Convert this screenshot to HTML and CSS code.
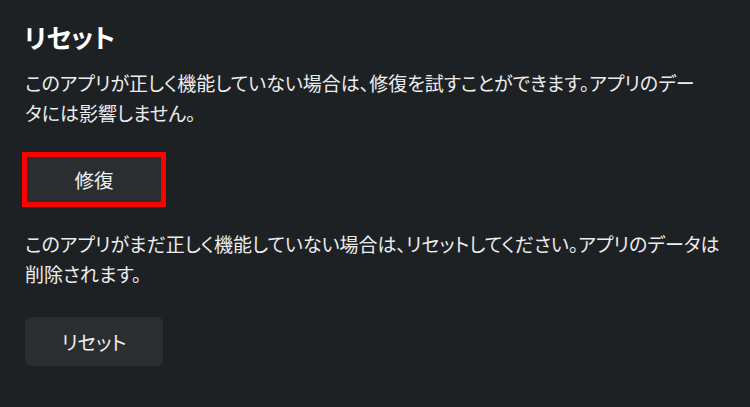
FILE: index.html
```html
<!DOCTYPE html>
<html lang="ja">
<head>
<meta charset="utf-8">
<link rel="stylesheet" href="styles.css">
</head>
<body>
<main class="panel">
  <h1 class="title">リセット</h1>
  <p class="desc">このアプリが正しく機能していない場合は、修復を試すことができます。アプリのデー<br>タには影響しません。</p>
  <button class="btn btn-highlight">修復</button>
  <p class="desc desc-second">このアプリがまだ正しく機能していない場合は、リセットしてください。アプリのデータは<br>削除されます。</p>
  <button class="btn btn-last">リセット</button>
</main>
</body>
</html>
```
FILE: styles.css
```css
html, body {
  margin: 0;
  padding: 0;
  background: #1e2124;
  width: 750px;
  height: 407px;
  overflow: hidden;
}
.panel {
  display: flex;
  flex-direction: column;
  align-items: flex-start;
  padding: 19px 0 0 24px;
  font-family: "Noto Sans CJK JP", "Noto Sans", sans-serif;
  font-feature-settings: "palt";
  color: #ededed;
}
.title {
  margin: 0;
  font-size: 26px;
  line-height: 36px;
  font-weight: 700;
  color: #ffffff;
}
.desc {
  margin: 13px 0 0 1px;
  width: 720px;
  font-size: 19px;
  line-height: 30px;
  white-space: nowrap;
}
.desc-second {
  margin-top: 25px;
}
.btn {
  margin-top: 27px;
  margin-left: 1px;
  width: 138px;
  height: 49px;
  border: none;
  border-radius: 6px;
  background: #2b2e31;
  color: #f0f0f0;
  font-family: inherit;
  font-feature-settings: "palt";
  font-size: 19.5px;
  padding: 0;
}
.btn-highlight {
  outline: 5px solid #ff0000;
  outline-offset: -2px;
  border-radius: 0;
}
.btn-last {
  margin-top: 28px;
}
```
